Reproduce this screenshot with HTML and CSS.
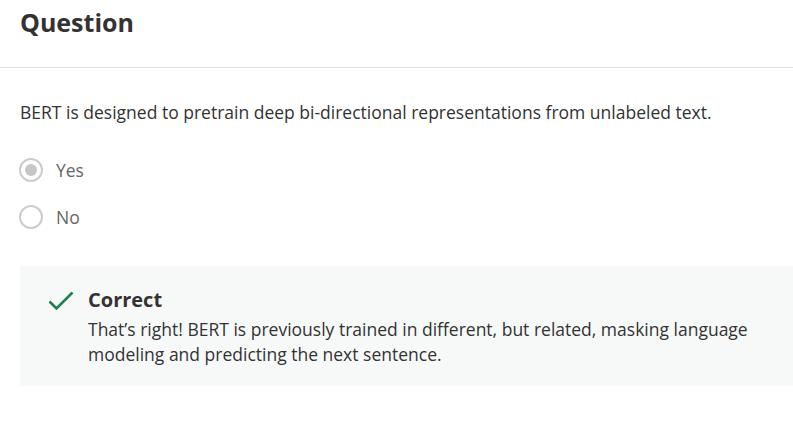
FILE: index.html
```html
<!DOCTYPE html>
<html>
<head>
<meta charset="utf-8">
<link rel="stylesheet" href="styles.css">
</head>
<body>
<div class="page">
  <header class="header">
    <h1 class="title">Question</h1>
  </header>
  <main class="content">
    <p class="prompt">BERT is designed to pretrain deep bi-directional representations from unlabeled text.</p>
    <div class="options">
      <div class="option">
        <span class="radio radio-checked"><span class="dot"></span></span>
        <span class="label">Yes</span>
      </div>
      <div class="option">
        <span class="radio"></span>
        <span class="label">No</span>
      </div>
    </div>
    <div class="feedback">
      <svg class="check" width="26" height="20" viewBox="0 0 26 20" aria-hidden="true">
        <path d="M1.5 10.5 L8.5 17.5 L24.5 1.5" fill="none" stroke="#1f7f52" stroke-width="2.6" stroke-linecap="butt" stroke-linejoin="miter"/>
      </svg>
      <div class="feedback-body">
        <div class="feedback-title">Correct</div>
        <div class="feedback-text">That’s right! BERT is previously trained in different, but related, masking language modeling and predicting the next sentence.</div>
      </div>
    </div>
  </main>
</div>
</body>
</html>
```
FILE: styles.css
```css
html, body {
  margin: 0;
  padding: 0;
  background: #ffffff;
}
body {
  font-family: "Open Sans", "Noto Sans", sans-serif;
  color: #333333;
}
.header {
  padding: 6px 20px 29px;
  border-bottom: 1px solid #e4e4e4;
}
.title {
  margin: 0;
  font-size: 25px;
  line-height: 32px;
  font-weight: 700;
  color: #333333;
}
.content {
  padding: 32px 0 0 20px;
}
.prompt {
  margin: 0;
  font-size: 17.5px;
  line-height: 24px;
  color: #333333;
}
.options {
  margin-top: 34px;
  display: flex;
  flex-direction: column;
  gap: 23px;
}
.option {
  display: flex;
  align-items: center;
  height: 24px;
}
.radio {
  box-sizing: border-box;
  width: 24px;
  height: 24px;
  border: 2px solid #cccccc;
  border-radius: 50%;
  display: flex;
  align-items: center;
  justify-content: center;
  margin-left: -1px;
}
.dot {
  width: 12px;
  height: 12px;
  border-radius: 50%;
  background: #c6c6c6;
}
.label {
  margin-left: 13px;
  font-size: 17.5px;
  line-height: 24px;
  color: #666666;
}
.feedback {
  margin-top: 37px;
  background: #f7f9f9;
  display: flex;
  align-items: flex-start;
  padding: 22px 28px 18px 28px;
  min-height: 80px;
}
.check {
  flex: none;
  margin-top: 3px;
  margin-right: 14px;
}
.feedback-title {
  font-size: 20px;
  line-height: 24px;
  font-weight: 700;
  color: #333333;
}
.feedback-text {
  margin-top: 5px;
  font-size: 17.5px;
  line-height: 25px;
  color: #333333;
}
```
